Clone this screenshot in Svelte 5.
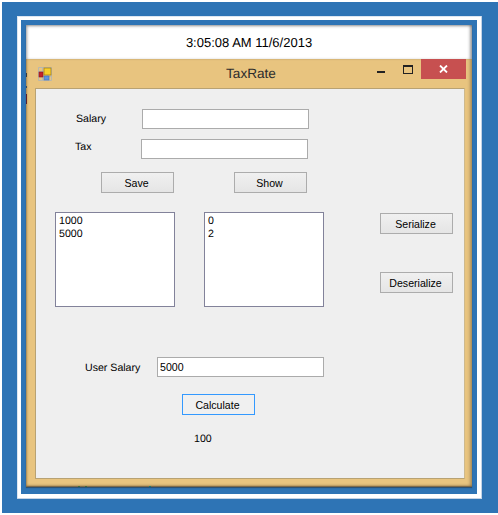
<script>
	let salary = $state('');
	let tax = $state('');
	let userSalary = $state('5000');
	const amounts = ['1000', '5000'];
	const taxes = ['0', '2'];
</script>

<div class="page">
	<div class="white-frame">
		<div class="inner-blue">
			<div class="shot">
				<div class="clock">3:05:08 AM 11/6/2013</div>
				<div class="window">
					<span class="edge-bits"></span>
					<span class="bottom-bits"></span>
					<div class="titlebar">
						<svg class="app-icon" width="14" height="14" viewBox="0 0 14 14">
							<path d="M0.5 0.5H13.5V13.5H0.5Z M0.5 4.5H13.5 M0.5 9.5H13.5 M4.5 0.5V13.5 M9.5 0.5V13.5" fill="none" stroke="#b9b7ad" />
							<rect x="1" y="5" width="4" height="5" fill="#c4222c" stroke="#8a1a1a" stroke-width="0.6" />
							<rect x="6" y="1" width="7" height="7" fill="#f8cf2a" stroke="#a5801a" stroke-width="0.8" />
							<rect x="6" y="9" width="5" height="4" fill="#5f94dc" stroke="#3f70b8" stroke-width="0.6" />
						</svg>
						<span class="title">TaxRate</span>
						<div class="caption">
							<span class="min"></span>
							<span class="max"></span>
							<span class="close">
								<svg width="9" height="8" viewBox="0 0 9 8">
									<path d="M1 0.5 L8 7.5 M8 0.5 L1 7.5" stroke="#fff" stroke-width="1.8" fill="none" />
								</svg>
							</span>
						</div>
					</div>
					<div class="client">
						<div class="row row-salary">
							<span class="label">Salary</span>
							<input class="field" bind:value={salary} />
						</div>
						<div class="row row-tax">
							<span class="label">Tax</span>
							<input class="field" bind:value={tax} />
						</div>
						<div class="row row-actions">
							<button>Save</button>
							<button>Show</button>
						</div>
						<div class="row row-lists">
							<div class="list">
								{#each amounts as a}<div>{a}</div>{/each}
							</div>
							<div class="list">
								{#each taxes as t}<div>{t}</div>{/each}
							</div>
							<div class="side">
								<button>Serialize</button>
								<button>Deserialize</button>
							</div>
						</div>
						<div class="row row-user">
							<span class="label">User Salary</span>
							<input class="field" bind:value={userSalary} />
						</div>
						<div class="row row-calc">
							<button class="default">Calculate</button>
						</div>
						<div class="row row-result">100</div>
					</div>
				</div>
			</div>
		</div>
	</div>
</div>

<style>
	:global(body) {
		margin: 0;
		background: #fff;
	}

	.page {
		width: 496px;
		height: 511px;
		margin: 2px 0 0 2px;
		padding: 14px 16px 14px 15px;
		box-sizing: border-box;
		background: #2e74b5;
		font-family: "Liberation Sans", Arial, sans-serif;
		font-size: 10.6px;
		text-rendering: geometricPrecision;
		color: #000;
	}

	.white-frame {
		width: 465px;
		height: 483px;
		padding: 4px;
		box-sizing: border-box;
		background: #fff;
		box-shadow: inset -1px -1px 0 #c3d3e6, inset 1px 1px 0 #dce6f1;
	}

	.inner-blue {
		width: 456px;
		height: 474px;
		background: #2e74b5;
		padding: 5px 0 0 5px;
		box-sizing: border-box;
	}

	.shot {
		width: 446px;
		box-shadow: 0 1px 1px rgba(40, 40, 40, 0.45);
	}

	.clock {
		height: 34px;
		background: #fff;
		display: flex;
		align-items: center;
		justify-content: center;
		font-size: 13px;
		box-shadow: inset 2px 2px 3px -1px rgba(70, 70, 70, 0.55), inset -3px 0 3px -1px rgba(70, 70, 70, 0.55);
	}

	.window {
		background: #e8c47f;
		height: 428px;
		padding: 0 7px 8px 9px;
		box-sizing: border-box;
		display: flex;
		flex-direction: column;
		position: relative;
		box-shadow: inset 0 -1px 0 #7c6a4c, inset 0 -3px 2px -1px rgba(120, 95, 60, 0.45), inset 2px 0 2px -1px rgba(90, 70, 40, 0.5), inset -3px 0 3px -1px rgba(110, 90, 60, 0.5);
	}

	.edge-bits {
		position: absolute;
		left: 0;
		top: 11px;
		width: 1px;
		height: 34px;
		background: linear-gradient(transparent 0 3px, #3a3a3a 3px 7px, transparent 7px 16px, #39485c 16px 18px, transparent 18px 24px, #5a1f2c 24px 34px);
	}

	.bottom-bits {
		position: absolute;
		left: 52px;
		bottom: 0;
		width: 73px;
		height: 1px;
		background: linear-gradient(90deg, #3c6a3c 0 2px, transparent 2px 7px, #3c6a3c 7px 9px, transparent 9px 71px, #1f7a6a 71px 73px);
	}

	.titlebar {
		height: 29px;
		flex: none;
		position: relative;
		display: flex;
		justify-content: center;
		padding-top: 7px;
		box-sizing: border-box;
	}

	.app-icon {
		position: absolute;
		left: 3px;
		top: 8px;
	}

	.title {
		font-size: 13.6px;
		color: #2c2c2c;
		padding-left: 2px;
	}

	.caption {
		position: absolute;
		right: -1px;
		top: 0;
		display: flex;
		align-items: flex-start;
	}

	.min {
		width: 8px;
		height: 2px;
		background: #222;
		margin: 12px 18px 0 0;
	}

	.max {
		width: 8px;
		height: 6px;
		border: 1px solid #222;
		border-top-width: 2px;
		margin: 6px 8px 0 0;
	}

	.close {
		width: 45px;
		height: 20px;
		background: #c75050;
		display: flex;
		align-items: center;
		justify-content: center;
	}

	.client {
		flex: 1;
		background: #efefef;
		border: 1px solid #b8a273;
		border-right-color: #cdb98d;
	}

	.row {
		display: flex;
		align-items: center;
		box-sizing: border-box;
	}

	.field {
		width: 167px;
		height: 20px;
		box-sizing: border-box;
		border: 1px solid #ababab;
		background: #fff;
		padding: 1px 2px;
		margin: 0;
		font: inherit;
		color: #000;
		outline: none;
	}

	button {
		width: 73px;
		height: 21px;
		padding: 0 2px 0 0;
		margin: 0;
		border: 1px solid #acacac;
		background: linear-gradient(#f0f0f0, #e5e5e5);
		font: inherit;
		color: #000;
	}

	.default {
		border-color: #3399ff;
		background: #f0f0f0;
	}

	.row-salary {
		margin-top: 20px;
		padding-left: 40px;
	}

	.row-salary .label {
		width: 66px;
	}

	.row-tax {
		margin-top: 10px;
		padding-left: 39px;
	}

	.row-tax .label {
		width: 66px;
		margin-top: -5px;
	}

	.row-actions {
		margin-top: 13px;
		padding-left: 65px;
		gap: 60px;
	}

	.row-lists {
		margin-top: 19px;
		padding-left: 19px;
		align-items: flex-start;
	}

	.list {
		width: 120px;
		height: 95px;
		box-sizing: border-box;
		border: 1px solid #82829a;
		background: #fff;
		padding: 2px 3px;
		line-height: 13px;
		margin-right: 29px;
	}

	.side {
		display: flex;
		flex-direction: column;
		gap: 38px;
		margin: 1px 0 0 27px;
	}

	.row-user {
		margin-top: 50px;
		padding-left: 49px;
	}

	.row-user .label {
		width: 72px;
		margin-top: 2px;
	}

	.row-calc {
		margin-top: 17px;
		padding-left: 146px;
	}

	.row-result {
		margin-top: 18px;
		padding-left: 158px;
	}
</style>
